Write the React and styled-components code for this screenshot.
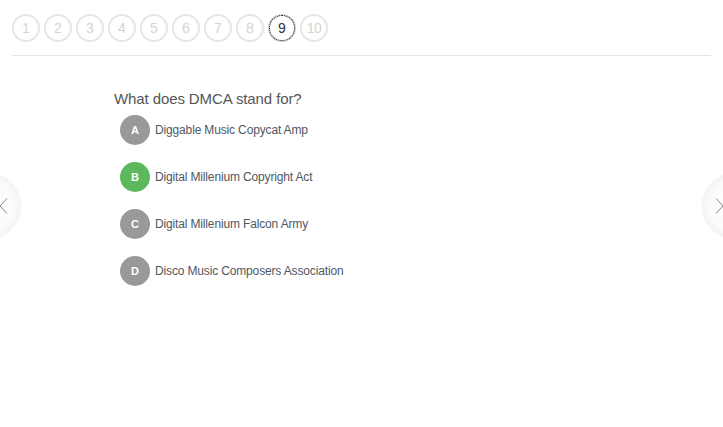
import React from "react";
import styled, { createGlobalStyle } from "styled-components";

const Global = createGlobalStyle`
  html, body { margin: 0; padding: 0; background: #fff; }
  body { font-family: "Liberation Sans", Arial, Helvetica, sans-serif; }
`;

const Page = styled.div`
  position: relative;
  width: 723px;
  height: 427px;
  overflow: hidden;
  background: #fff;
`;

const Header = styled.div`
  padding: 14px 12px 0;
`;

const Pager = styled.div`
  display: flex;
  gap: 4px;
`;

const PageDot = styled.button`
  box-sizing: border-box;
  width: 28px;
  height: 28px;
  padding: 0;
  border-radius: 50%;
  border: 2px solid ${(p) => (p.$active ? "#cfcfcf" : "#e6e6e6")};
  background: #fff;
  color: ${(p) => (p.$active ? "#333" : "#d4d4d4")};
  font-family: "Liberation Sans", Arial, sans-serif;
  font-size: 14px;
  line-height: 24px;
  text-align: center;
  cursor: pointer;
  outline: ${(p) => (p.$active ? "1px dotted #222" : "none")};
  outline-offset: -2px;
  letter-spacing: ${(p) => (p.$wide ? "-0.5px" : "0")};
`;

const Divider = styled.hr`
  margin: 13px 0 0;
  border: 0;
  border-top: 1px solid #e3e3e3;
  height: 0;
`;

const Quiz = styled.div`
  padding: 33px 0 0 114px;
`;

const Question = styled.div`
  font-size: 15px;
  line-height: 19px;
  color: #555;
  letter-spacing: -0.1px;
`;

const Answers = styled.ul`
  list-style: none;
  margin: 7px 0 0 6px;
  padding: 0;
  display: flex;
  flex-direction: column;
  gap: 17px;
`;

const Answer = styled.li`
  display: flex;
  align-items: center;
  gap: 5px;
  height: 30px;
`;

const Letter = styled.span`
  width: 30px;
  height: 30px;
  border-radius: 50%;
  background: ${(p) => (p.$correct ? "#5cb85c" : "#999999")};
  color: #fff;
  font-weight: bold;
  font-size: 11px;
  display: flex;
  align-items: center;
  justify-content: center;
`;

const AnswerText = styled.span`
  font-size: 12px;
  letter-spacing: -0.15px;
  color: #4f5761;
`;

const NavButton = styled.button`
  position: absolute;
  top: 173px;
  ${(p) => (p.$side === "left" ? "left: -45px;" : "right: -45px;")}
  width: 66px;
  height: 66px;
  padding: 0;
  border: 0;
  border-radius: 50%;
  background: radial-gradient(circle at 50% 50%, #ffffff 0%, #fbfbfb 55%, #ebebeb 86%, #dfdfdf 100%);
  box-shadow: 0 0 2px rgba(0, 0, 0, 0.06);
  display: flex;
  align-items: center;
  justify-content: ${(p) => (p.$side === "left" ? "flex-end" : "flex-start")};
  ${(p) => (p.$side === "left" ? "padding-right: 13px;" : "padding-left: 13px;")}
  box-sizing: border-box;
  cursor: pointer;
`;

const Chevron = ({ dir }) => (
  <svg width="9" height="16" viewBox="0 0 9 16">
    <polyline
      points={dir === "left" ? "8,0.5 1,8 8,15.5" : "1,0.5 8,8 1,15.5"}
      fill="none"
      stroke="#777"
      strokeWidth="0.9"
    />
  </svg>
);

const pages = [1, 2, 3, 4, 5, 6, 7, 8, 9, 10];
const answers = [
  { key: "A", text: "Diggable Music Copycat Amp" },
  { key: "B", text: "Digital Millenium Copyright Act", correct: true },
  { key: "C", text: "Digital Millenium Falcon Army" },
  { key: "D", text: "Disco Music Composers Association" },
];

export default function App() {
  return (
    <Page>
      <Global />
      <Header>
        <Pager>
          {pages.map((n) => (
            <PageDot key={n} $active={n === 9} $wide={n === 10}>
              {n}
            </PageDot>
          ))}
        </Pager>
        <Divider />
      </Header>
      <Quiz>
        <Question>What does DMCA stand for?</Question>
        <Answers>
          {answers.map((a) => (
            <Answer key={a.key}>
              <Letter $correct={a.correct}>{a.key}</Letter>
              <AnswerText>{a.text}</AnswerText>
            </Answer>
          ))}
        </Answers>
      </Quiz>
      <NavButton $side="left" aria-label="Previous">
        <Chevron dir="left" />
      </NavButton>
      <NavButton $side="right" aria-label="Next">
        <Chevron dir="right" />
      </NavButton>
    </Page>
  );
}
